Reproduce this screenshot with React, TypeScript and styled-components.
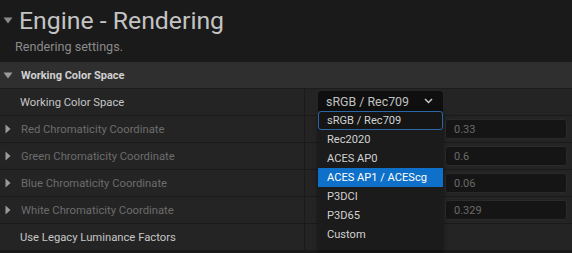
import React from "react";
import styled, { createGlobalStyle } from "styled-components";

const GlobalStyle = createGlobalStyle`
  html, body {
    margin: 0;
    padding: 0;
    background: #1a1a1a;
  }
  body {
    font-family: "Roboto", "Noto Sans", sans-serif;
  }
`;

const Page = styled.div`
  position: relative;
  width: 572px;
  height: 253px;
  overflow: hidden;
  background: #1a1a1a;
`;

const Header = styled.div`
  display: flex;
  flex-direction: column;
  padding-top: 4px;
  height: 62px;
  box-sizing: border-box;
`;

const TitleRow = styled.div`
  display: flex;
  align-items: center;
  gap: 6px;
  padding-left: 3px;
  height: 32px;
`;

const Title = styled.h1`
  margin: 0;
  font-size: 24.8px;
  font-weight: 400;
  color: #c4c4c4;
`;

const Subtitle = styled.div`
  padding-left: 15px;
  margin-top: 3px;
  font-size: 12.6px;
  color: #8a8a8a;
`;

const SectionBar = styled.div`
  display: flex;
  align-items: center;
  gap: 8px;
  height: 26px;
  padding-left: 3px;
  background: #2f2f2f;
  border-bottom: 1px solid #1c1c1c;
  font-size: 11px;
  font-weight: 700;
  color: #d0d0d0;
`;

const Rows = styled.div`
  display: flex;
  flex-direction: column;
`;

const Row = styled.div`
  display: grid;
  grid-template-columns: 305px 1fr;
  height: 26px;
  background: #242424;
  border-bottom: 1px solid #1a1a1a;
`;

const NameCell = styled.div<{ $dim?: boolean }>`
  display: flex;
  align-items: center;
  gap: 10px;
  padding-left: 5px;
  font-size: 11.25px;
  color: ${(p) => (p.$dim ? "#6c6c6c" : "#c6c6c6")};
  border-right: 1px solid #1a1a1a;
`;

const Spacer = styled.span`
  width: 5px;
`;

const ValueCell = styled.div`
  display: flex;
  align-items: center;
  padding-left: 140px;
`;

const NumberBox = styled.div`
  width: 112px;
  height: 18px;
  display: flex;
  align-items: center;
  padding-left: 8px;
  background: #151515;
  border: 1px solid #2a2a2a;
  border-radius: 3px;
  font-size: 11px;
  color: #6a6a6a;
`;

const Combo = styled.div`
  position: absolute;
  left: 318px;
  top: 91px;
  width: 125px;
  height: 20px;
  display: flex;
  align-items: center;
  justify-content: space-between;
  box-sizing: border-box;
  padding: 0 10px 0 8px;
  background: #0f0f0f;
  border-radius: 4px 4px 0 0;
  font-size: 12.4px;
  color: #c0c0c0;
`;

const Menu = styled.ul`
  position: absolute;
  left: 318px;
  top: 111px;
  width: 125px;
  margin: 0;
  padding: 0 0 6px 0;
  list-style: none;
  background: #1b1b1b;
  box-shadow: 0 2px 4px rgba(0, 0, 0, 0.5);
`;

const Item = styled.li<{ $active?: boolean; $hover?: boolean }>`
  height: 19px;
  box-sizing: border-box;
  display: flex;
  align-items: center;
  padding-left: 8px;
  font-size: 11.1px;
  color: ${(p) => (p.$hover ? "#ffffff" : "#d2d2d2")};
  background: ${(p) => (p.$hover ? "#0e70c8" : p.$active ? "#151515" : "transparent")};
  border: 1px solid ${(p) => (p.$active ? "#2a66a8" : "transparent")};
  border-radius: ${(p) => (p.$active ? "3px" : "0")};
`;

const DownCaret = ({ color }: { color: string }) => (
  <svg width="10" height="7" viewBox="0 0 10 7">
    <polygon points="0.5,0.5 9.5,0.5 5,6.5" fill={color} />
  </svg>
);

const RightCaret = () => (
  <svg width="6" height="10" viewBox="0 0 6 10">
    <polygon points="0.5,0.5 5.5,5 0.5,9.5" fill="#9a9a9a" />
  </svg>
);

const Chevron = () => (
  <svg width="9" height="6" viewBox="0 0 9 6">
    <polyline points="1,1 4.5,4.5 8,1" fill="none" stroke="#c8c8c8" strokeWidth="1.5" />
  </svg>
);

const coords = [
  { name: "Red Chromaticity Coordinate", value: "0.33" },
  { name: "Green Chromaticity Coordinate", value: "0.6" },
  { name: "Blue Chromaticity Coordinate", value: "0.06" },
  { name: "White Chromaticity Coordinate", value: "0.329" },
];

const options = ["sRGB / Rec709", "Rec2020", "ACES AP0", "ACES AP1 / ACEScg", "P3DCI", "P3D65", "Custom"];

export default function App() {
  return (
    <Page>
      <GlobalStyle />
      <Header>
        <TitleRow>
          <DownCaret color="#8a8a8a" />
          <Title>Engine - Rendering</Title>
        </TitleRow>
        <Subtitle>Rendering settings.</Subtitle>
      </Header>
      <SectionBar>
        <DownCaret color="#9a9a9a" />
        Working Color Space
      </SectionBar>
      <Rows>
        <Row>
          <NameCell>
            <Spacer />
            Working Color Space
          </NameCell>
          <ValueCell />
        </Row>
        {coords.map((c) => (
          <Row key={c.name}>
            <NameCell $dim>
              <RightCaret />
              {c.name}
            </NameCell>
            <ValueCell>
              <NumberBox>{c.value}</NumberBox>
            </ValueCell>
          </Row>
        ))}
        <Row>
          <NameCell>
            <Spacer />
            Use Legacy Luminance Factors
          </NameCell>
          <ValueCell />
        </Row>
      </Rows>
      <Combo>
        sRGB / Rec709
        <Chevron />
      </Combo>
      <Menu>
        {options.map((o, i) => (
          <Item key={o} $active={i === 0} $hover={i === 3}>
            {o}
          </Item>
        ))}
      </Menu>
    </Page>
  );
}
